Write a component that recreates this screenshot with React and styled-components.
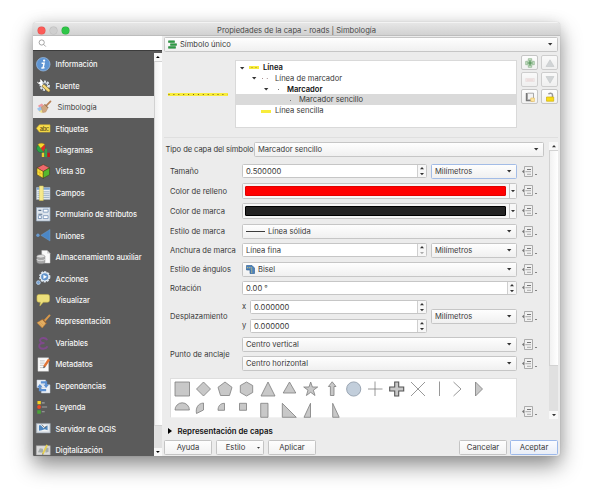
import React from 'react';
import styled, { createGlobalStyle, css } from 'styled-components';

const GlobalStyle = createGlobalStyle`
  * { box-sizing: border-box; }
  html, body { margin: 0; background: #fff; overflow: hidden; }
  body {
    font-family: Inter, "Liberation Sans", sans-serif;
    font-size: 7.6px;
    line-height: 10px;
    color: #3a3a3a;
    white-space: nowrap;
  }
  svg { display: block; overflow: visible; flex: none; }
`;

const Desktop = styled.main`
  width: 593px;
  height: 500px;
  padding: 22px 0 0 33px;
  overflow: hidden;
`;
const Window = styled.section`
  width: 527px;
  height: 434px;
  display: flex;
  flex-direction: column;
  background: #ececec;
  border-radius: 4px 4px 3px 1px;
  overflow: hidden;
  box-shadow: 0 0 1px rgba(0, 0, 0, 0.25), 0 10px 21px rgba(0, 0, 0, 0.42), 0 1px 14px rgba(0, 0, 0, 0.1);
`;
const TitleBar = styled.header`
  height: 14px;
  flex: none;
  display: grid;
  grid-template-columns: 60px 1fr 60px;
  align-items: center;
  background: linear-gradient(#e6e6e6, #d1d1d1);
  border-top: 1px solid #f3f3f3;
  border-bottom: 1px solid #bdbdbd;
`;
const Lights = styled.div`
  display: flex;
  gap: 5px;
  padding-left: 5px;
`;
const Light = styled.i`
  width: 7px;
  height: 7px;
  border-radius: 50%;
  background: ${(p) => p.$color};
  box-shadow: 0 0 0 0.5px ${(p) => p.$ring};
`;
const Title = styled.h1`
  margin: 0;
  padding-top: 2px;
  font-size: 7.6px;
  font-weight: 400;
  line-height: 12px;
  text-align: center;
  color: #4a4a4a;
`;
const Body = styled.div`
  flex: 1;
  min-height: 0;
  display: flex;
`;

/* sidebar */
const Sidebar = styled.aside`
  width: 129px;
  flex: none;
  display: flex;
  flex-direction: column;
`;
const Search = styled.div`
  height: 14px;
  flex: none;
  padding: 3px 0 0 5px;
  background: #fff;
`;
const SideBody = styled.div`
  flex: 1;
  min-height: 0;
  display: flex;
  background: #5b5b5b;
  border-top: 1px solid #3c3c3c;
`;
const SideList = styled.ul`
  flex: 1;
  margin: 0;
  padding: 2.5px 0 0;
  list-style: none;
  overflow: hidden;
`;
const SideItem = styled.li`
  height: 21.45px;
  display: flex;
  align-items: center;
  gap: 5px;
  padding-left: 3px;
  font-size: 7.5px;
  letter-spacing: -0.08px;
  font-weight: 500;
  color: #f6f6f6;
  ${(p) => p.$selected && css`
    gap: 7px;
    font-weight: 400;
    letter-spacing: 0;
    color: #3d3d3d;
    background: #ececec;
  `}
`;
const SideText = styled.span`
  padding-top: 2px;
`;
const ScrollBar = styled.div`
  width: ${(p) => p.$w}px;
  flex: none;
  display: flex;
  flex-direction: column;
  margin: ${(p) => p.$top || 0}px 0 ${(p) => p.$bottom || 0}px;
  background: #e0e0e0;
`;
const ScrollButton = styled.div`
  height: 8px;
  flex: none;
  display: flex;
  align-items: center;
  justify-content: center;
  background: #f8f8f8;
`;
const Thumb = styled.div`
  height: ${(p) => p.$h}px;
  background: linear-gradient(90deg, #f2f2f2, #fff);
  border: solid #d2d2d2;
  border-width: 1px 0 1px 1px;
`;
const Track = styled.div`
  flex: 1;
`;

/* main panel */
const Main = styled.div`
  flex: 1;
  min-width: 0;
  display: flex;
  flex-direction: column;
  padding: 1px 2px 0 2px;
`;
const Field = styled.div`
  height: ${(p) => p.$h || 15}px;
  width: ${(p) => (p.$w ? p.$w + 'px' : 'auto')};
  flex: ${(p) => (p.$w ? 'none' : 1)};
  display: flex;
  align-items: center;
  gap: 3px;
  padding: 0 5px 0 3px;
  border: 1px solid ${(p) => (p.$focus ? '#a3bce6' : '#c6c6c6')};
  border-radius: 1.5px;
  background: linear-gradient(#fefefe, #f0f0f0);
`;
const Grow = styled.span`
  flex: 1;
  padding-top: 1px;
`;
const SpinField = styled(Field)`
  height: 14px;
  padding-right: 0;
  background: #fff;
`;
const Stepper = styled.div`
  width: 9px;
  height: 12px;
  display: flex;
  flex-direction: column;
  align-items: center;
  justify-content: center;
  gap: 3px;
  border-left: 1px solid #cfcfcf;
  background: #f7f7f7;
`;
const TopRow = styled.div`
  display: flex;
  flex: none;
  height: 15px;
`;
const SymbolRow = styled.div`
  display: flex;
  height: 86px;
  flex: none;
  border-bottom: 1px solid #dfdfdf;
`;
const Preview = styled.div`
  width: 71px;
  padding: 41px 0 0 4px;
`;
const Tree = styled.div`
  width: 282px;
  height: 68px;
  margin-top: 8px;
  padding-top: 1px;
  background: #fff;
  border: 1px solid #d9d9d9;
`;
const TreeRow = styled.div`
  height: 10.8px;
  display: flex;
  align-items: center;
  padding: 1px 0 0 ${(p) => 4 + p.$depth * 12}px;
  font-weight: ${(p) => (p.$bold ? 600 : 400)};
  color: ${(p) => (p.$bold ? '#111' : '#3a3a3a')};
  background: ${(p) => (p.$selected ? '#dadada' : 'transparent')};
`;
const TreeArrow = styled.span`
  width: 9px;
`;
const TreeIcon = styled.span`
  width: 14px;
`;
const ToolGrid = styled.div`
  display: grid;
  grid-template-columns: 17px 17px;
  grid-auto-rows: 15px;
  align-content: start;
  gap: 2px 3px;
  margin: 3px 0 0 4px;
`;
const ToolButton = styled.button`
  display: flex;
  align-items: center;
  justify-content: center;
  padding: 0;
  border: 1px solid #c6c6c6;
  border-radius: 2px;
  background: linear-gradient(#fdfdfd, #f1f1f1);
  opacity: ${(p) => (p.$dim ? 0.8 : 1)};
`;
const Settings = styled.div`
  display: flex;
  height: 283px;
  flex: none;
`;
const Form = styled.div`
  width: 385px;
  padding-top: 4px;
`;
const TypeRow = styled.div`
  display: flex;
  align-items: center;
  height: 15px;
  width: 380px;
`;
const TypeLabel = styled.span`
  width: 90px;
  padding: 1px 0 0 1.5px;
  letter-spacing: -0.09px;
`;
const Row = styled.div`
  display: flex;
  align-items: center;
  height: ${(p) => p.$h}px;
  margin-top: ${(p) => p.$gap}px;
  padding-left: 6px;
`;
const Label = styled.span`
  width: 72px;
  flex: none;
  padding-top: 1px;
`;
const Controls = styled.div`
  width: 275px;
  display: flex;
  gap: 4px;
`;
const Stack = styled.div`
  flex: 1;
  display: flex;
  flex-direction: column;
  gap: ${(p) => p.$gap}px;
  > ${Field} { flex: none; }
`;
const AxisRow = styled.div`
  display: flex;
  align-items: center;
`;
const Axis = styled.span`
  width: 8px;
`;
const Overrides = styled.div`
  display: flex;
  flex-direction: column;
  gap: 7px;
  margin-left: 5px;
`;
const Centered = styled.div`
  display: flex;
  align-items: center;
`;
const ColorField = styled(Field)`
  height: 16px;
  padding: 0 0 0 2px;
  background: #f7f7f7;
`;
const Swatch = styled.div`
  flex: 1;
  height: 10px;
  border-radius: 1px;
  background: ${(p) => p.$color};
  border: 1px solid ${(p) => p.$edge};
`;
const ColorMenu = styled.div`
  width: 7px;
  height: 14px;
  display: flex;
  align-items: center;
  justify-content: center;
  border-left: 1px solid #c6c6c6;
`;
const ShapeRow = styled.div`
  display: flex;
  align-items: flex-end;
  margin: 7px 0 0 6px;
`;
const Shapes = styled.div`
  width: 347px;
  height: 40px;
  background: #fff;
  border: 1px solid #dedede;
  border-bottom-color: #f2f2f2;
`;
const LayerHeading = styled.h2`
  display: flex;
  align-items: center;
  gap: 6px;
  height: 10px;
  flex: none;
  margin: 5px 0 4px;
  padding-left: 3.5px;
  font-size: 7.8px;
  font-weight: 600;
  line-height: 10px;
  color: #111;
`;
const Footer = styled.footer`
  display: flex;
  gap: 3px;
  height: 15px;
  flex: none;
`;
const Button = styled.button`
  width: 48px;
  height: 15px;
  display: flex;
  align-items: center;
  justify-content: center;
  gap: 12px;
  padding: 1px 0 0 ${(p) => (p.$menu ? 6 : 0)}px;
  font: inherit;
  font-size: 7.7px;
  color: #3a3a3a;
  border: 1px solid ${(p) => (p.$primary ? '#9db9ea' : '#c4c4c4')};
  border-radius: 1.5px;
  background: ${(p) => (p.$primary ? 'linear-gradient(#fbfcff, #e9eef8)' : 'linear-gradient(#fefefe, #f2f2f2)')};
`;
const ButtonGroup = styled.div`
  display: flex;
  gap: 4px;
`;

/* small glyphs */
const Down = ({ w = 4.4, color = '#333' }) => (
  <svg width={w} height={w * 0.55} viewBox="0 0 8 4.4"><path d="M0 0h8L4 4.4z" fill={color} /></svg>
);
const Up = ({ w = 4.4, color = '#333' }) => (
  <svg width={w} height={w * 0.55} viewBox="0 0 8 4.4"><path d="M0 4.4h8L4 0z" fill={color} /></svg>
);
const Spin = ({ min }) => (
  <Stepper><Up w={4} /><Down w={4} color={min ? '#aaa' : '#333'} /></Stepper>
);
const Override = () => (
  <svg width="16" height="12" viewBox="0 0 16 12">
    <path d="M3.2 2.500L0 5.500l3.200 3z" fill="#777" />
    <path d="M2.500 3V.5h8v10h-8V8" fill="#f1f1f1" stroke="#999" strokeWidth=".8" />
    <path d="M5 3.500h4" stroke="#777" strokeWidth="1" />
    <path d="M3.400 5.700h5.600M5 8.300h4" stroke="#999" strokeWidth=".8" />
    <path d="M13 8.500h2" stroke="#777" strokeWidth=".9" />
  </svg>
);

const icons = {
  info: (
    <>
      <circle cx="7.5" cy="7.5" r="7" fill="#5f95d3" stroke="#9dbfe6" strokeWidth=".7" />
      <circle cx="8.4" cy="3.7" r="1.2" fill="#fff" />
      <path d="M5.8 6.4h2.6L7.3 11.2h1.5M5.5 11.4l2-.1" fill="none" stroke="#fff" strokeWidth="1.5" />
    </>
  ),
  source: (
    <>
      <circle cx="9" cy="8" r="4.2" fill="none" stroke="#dce4ed" strokeWidth="2.4" strokeDasharray="2 1.1" />
      <circle cx="9" cy="8" r="3.3" fill="#6b7580" stroke="#e6ebf1" strokeWidth="1" />
      <path d="M3.5 4.5l5 4.5" stroke="#fff" strokeWidth="2" />
      <path d="M1 3.6l2 1.2 1.6-1.3-.6-2.2c2 .2 3 2 2.200 3.800C5 7.300 2 6.800 1 3.600z" fill="#fff" />
      <path d="M8 8.200l5 4.600" stroke="#8d7636" strokeWidth="3.400" strokeLinecap="round" />
      <path d="M8 8.200l5 4.600" stroke="#f5d878" strokeWidth="2.300" strokeLinecap="round" />
    </>
  ),
  symbology: (
    <>
      <path d="M2 6l4-2.500 2 2-3 4z" fill="#ef9aa0" />
      <path d="M1 9l4-2.500 3 4-4 2z" fill="#9cc3ea" />
      <path d="M3 12l3-2 3 2-3 1.500z" fill="#efe48d" />
      <path d="M5.500 7.500l4-3 3 3.500-2.500 4.500-3 .500z" fill="#cfa680" stroke="#b58c66" strokeWidth=".5" />
      <path d="M11 5.500L15 1.500" stroke="#b98256" strokeWidth="1.800" strokeLinecap="round" />
      <path d="M9 4.500l3.500 3.700" stroke="#8b6a50" strokeWidth="1" />
    </>
  ),
  labels: (
    <>
      <path d="M.5 7.500L3.500 4h11v7.500h-11z" fill="#fbe04e" stroke="#d9b92a" strokeWidth=".6" />
      <text x="4" y="10" fontSize="6" fontWeight="600" fill="#6b5a19" textLength="9.500">abc</text>
    </>
  ),
  diagrams: (
    <>
      <circle cx="5" cy="5.500" r="4.300" fill="#2fa34a" stroke="#176b2b" strokeWidth=".5" />
      <path d="M5 5.500L2 1.500C4-.3 7-.2 9 1.500z" fill="#fbd62b" stroke="#b58c12" strokeWidth=".4" />
      <path d="M5 5.500L9 1.800c1 2.500.5 5-1.500 7.200z" fill="#de2b28" />
      <path d="M6 10h2.500v4.500H6z" fill="#e9cf2f" />
      <path d="M9 6h2.500v8.500H9z" fill="#34a04a" />
      <path d="M11.800 10h2.500v4.500h-2.500z" fill="#c81414" />
    </>
  ),
  view3d: (
    <g stroke="#42340f" strokeWidth=".5" strokeLinejoin="round">
      <path d="M7.500.5L14 4 7.500 7.800 1 4z" fill="#f0686c" />
      <path d="M1 4l6.500 3.800v7L1 11z" fill="#fbdf3a" />
      <path d="M14 4L7.500 7.800v7L14 11z" fill="#55b82e" />
      <path d="M4 6v7M1 7.600l6.500 3.600" stroke="#cc9c18" />
    </g>
  ),
  fields: (
    <>
      <path d="M.5 1.500h14v12.500H.5z" fill="#e8eef4" stroke="#a8b4c0" strokeWidth=".5" />
      <path d="M.8 1.800h13.500v2.200H.8z" fill="#7da5d1" />
      <path d="M1.500 6h12.500M1.500 8h12.500M1.500 10h12.500M1.500 12h12.500" stroke="#92a9c0" strokeWidth=".9" />
      <path d="M3.500 0h4v15h-4z" fill="#f6e98c" stroke="#d8c44e" strokeWidth=".5" />
    </>
  ),
  form: (
    <>
      <path d="M.5.5h14v14H.5z" fill="#dfe6ee" stroke="#94a7bc" strokeWidth=".7" />
      <path d="M2.500 3.500h3M2.500 7.500h4M2.500 11.500h3" stroke="#5d738d" strokeWidth="1.200" />
      <path d="M7.500 2.300h5v3h-5zM7.500 9h5v3h-5zM2.500 9h3v3h-3z" fill="#fff" stroke="#6d8db3" strokeWidth=".8" />
    </>
  ),
  joins: (
    <>
      <circle cx="2" cy="7.500" r="1.700" fill="#6a9bd0" />
      <path d="M5 7.500L14.500 1.500v12z" fill="#4b87c6" stroke="#78a7d7" strokeWidth=".4" />
    </>
  ),
  storage: (
    <>
      <path d="M6 .5h5.500l3 3v10H6z" fill="#fafafa" stroke="#c9c9c9" strokeWidth=".5" />
      <path d="M11.500.5v3h3z" fill="#cfcfcf" />
      <path d="M.8 6.500v6c0 2.400 8.400 2.400 8.400 0v-6z" fill="#a8a8a8" stroke="#777" strokeWidth=".5" />
      <ellipse cx="5" cy="6.500" rx="4.200" ry="1.700" fill="#dedede" stroke="#888" strokeWidth=".5" />
      <path d="M.8 9.500c0 2 8.400 2 8.400 0" fill="none" stroke="#eee" strokeWidth=".8" />
    </>
  ),
  actions: (
    <>
      <circle cx="9" cy="6" r="5" fill="none" stroke="#d7e1ec" strokeWidth="1.800" strokeDasharray="2.200 1" />
      <circle cx="9" cy="6" r="4.300" fill="#6294cc" stroke="#e7eef5" strokeWidth="1.200" />
      <path d="M7.700 3.800L11.300 6 7.700 8.200z" fill="#fff" />
      <circle cx="2.500" cy="12" r="1.900" fill="#77a3d4" stroke="#b9cee5" strokeWidth="1" />
    </>
  ),
  display: (
    <path d="M3 1.500h9q2 0 2 2v4q0 2-2 2H7.500L4 13.500l.5-4H3q-2 0-2-2v-4q0-2 2-2z" fill="#eddf7b" stroke="#c6b54a" strokeWidth=".6" />
  ),
  rendering: (
    <>
      <path d="M9 7l5-5.500" stroke="#d8984a" strokeWidth="2" strokeLinecap="round" />
      <path d="M1 9l6-3.500 3.500 4L6.500 14.500z" fill="#e3ae62" stroke="#b9772f" strokeWidth=".5" />
      <path d="M6.500 5l4.500 5" stroke="#9b6432" strokeWidth="1.100" />
      <path d="M3 9.500l3.500 4M4.500 8.500L8 12" stroke="#c48a42" strokeWidth=".5" />
    </>
  ),
  variables: (
    <path d="M11.500 4.500C10.500 1 4 1.500 4.200 4.500c.2 2.300 2.500 2.800 4.600 2.800-3 0-5.600.7-5.500 3.200.1 3.500 7.500 3.500 8.500.2" fill="none" stroke="#7f4a8b" strokeWidth="1.900" />
  ),
  metadata: (
    <>
      <path d="M2 .8h11v14H2z" fill="#fafafa" stroke="#ccc" strokeWidth=".4" />
      <path d="M4 4h5M4 6.300h5M4 8.600h4M4 11h5" stroke="#aaa" strokeWidth=".7" />
      <path d="M8.500 10L13.500 2.500" stroke="#e27536" strokeWidth="2.600" />
      <path d="M7.500 11.600l.5-2.400 1.700 1.200z" fill="#444" />
    </>
  ),
  dependencies: (
    <>
      <path d="M1 1h9v8H1zM5.500 6h9v8.500h-9z" fill="#edf1f6" stroke="#b7c3d1" strokeWidth=".5" />
      <path d="M5 3.500h5.500v3M10.500 11.500H4V8" fill="none" stroke="#5b90d2" strokeWidth="2.100" />
      <path d="M7.700 6h5.600l-2.800 3.200zM1.200 8.500h5.600L4 5.300z" fill="#5b90d2" />
    </>
  ),
  legend: (
    <>
      <path d="M1.500 1h3.500v3.500H1.500z" fill="#f4d221" />
      <circle cx="3.200" cy="7.300" r="2" fill="#ea4b27" />
      <path d="M1.300 10.500H5v3.700H1.300z" fill="#49a637" />
      <path d="M6 3h3M6 7.300h5.500M6 12.200h3" stroke="#a2a2a2" strokeWidth="1.100" />
    </>
  ),
  server: (
    <>
      <path d="M.3 2.500h14.400v9.800H.3z" fill="#d8dde3" stroke="#9ba5b0" strokeWidth=".6" />
      <path d="M2 4h11v6.500H2z" fill="#f2f5f7" />
      <path d="M3 4.500h2l3 3L12 4.500v5L9 8.500 6 9.500l-3 .500z" fill="#4e86bf" />
      <path d="M6 3.800l3 3 2-1.500" fill="none" stroke="#3c3c3c" strokeWidth=".7" />
    </>
  ),
  digitizing: (
    <>
      <path d="M.3 2.800h14.400v9.500H.3z" fill="#dadada" stroke="#a7a7a7" strokeWidth=".5" />
      <path d="M2 9.500l2-4 3 .5 1 4zM9 5h4v4l-3 1z" fill="#a5acaa" />
      <path d="M7 11.500L11.500 2" stroke="#e6d04e" strokeWidth="1.800" />
      <path d="M6.500 12.500l.2-1.600 1.200.6z" fill="#555" />
    </>
  ),
};

const SideIcon = ({ name }) => <svg width="14.500" height="14.500" viewBox="0 0 15 15">{icons[name]}</svg>;

const sections = [
  ['info', 'Información'],
  ['source', 'Fuente'],
  ['symbology', 'Simbología'],
  ['labels', 'Etiquetas'],
  ['diagrams', 'Diagramas'],
  ['view3d', 'Vista 3D'],
  ['fields', 'Campos'],
  ['form', 'Formulario de atributos'],
  ['joins', 'Uniones'],
  ['storage', 'Almacenamiento auxiliar'],
  ['actions', 'Acciones'],
  ['display', 'Visualizar'],
  ['rendering', 'Representación'],
  ['variables', 'Variables'],
  ['metadata', 'Metadatos'],
  ['dependencies', 'Dependencias'],
  ['legend', 'Leyenda'],
  ['server', 'Servidor de QGIS'],
  ['digitizing', 'Digitalización'],
];

const ShapeGallery = () => (
  <svg width="345" height="38" viewBox="171 379 345 38" fill="#c8c8c8" stroke="#7e7e7e" strokeWidth=".8">
    <path d="M175 382h14.500v14H175z" />
    <path d="M203.500 382l7 7-7 7-7-7z" />
    <path d="M225 382l7 5.300-2.500 8.200h-9L218 387.300z" />
    <path d="M246.500 382l6.200 3.500v7l-6.200 3.500-6.200-3.500v-7z" />
    <path d="M268 382l7 14h-14z" />
    <path d="M289.500 382l6.300 11h-12.600z" />
    <path d="M310.700 382l1.700 5h5.300l-4.300 3.200 1.600 5.300-4.300-3.200-4.300 3.200 1.600-5.300-4.300-3.200h5.300z" />
    <path d="M332.200 381.800l3.800 4.700h-2v9h-3.600v-9h-2z" />
    <circle cx="353.700" cy="389" r="7.100" fill="#c2cedb" stroke="#8996a5" />
    <path d="M375 381.500v14.500M368 389h14.500M411 382l14 14M425 382l-14 14M439.500 381.500V396M453.500 382l7.500 7-7.500 7" fill="none" />
    <path d="M394.700 382h4v5h5v4h-5v5h-4v-5h-5v-4h5z" stroke="#555" strokeWidth="1.100" />
    <path d="M475.500 382l7 7-7 7z" />
    <path d="M175 410a7.200 7.200 0 0 1 14.400 0z" />
    <path d="M203.500 403v7l-7 3.500c-1-5 1-10 7-10.500z" />
    <path d="M224.500 403.300v7H218c0-4 2-7 6.500-7z" />
    <path d="M239.500 403.300h7v7h-7z" />
    <path d="M260.700 403.300h7.300v14h-7.300z" />
    <path d="M282.300 403.300l14 14h-14z" />
    <path d="M310.500 403.300v14h-6.500z" />
    <path d="M332.700 403.300v14h6.500z" />
  </svg>
);

const Unit = ({ focus }) => (
  <Field $w={86} $focus={focus}><Grow>Milímetros</Grow><Down /></Field>
);

const FormRow = ({ label, h, gap, overrides = 1, children }) => (
  <Row $h={h} $gap={gap}>
    <Label>{label}</Label>
    <Controls>{children}</Controls>
    <Overrides>{Array.from({ length: overrides }, (_, i) => <Override key={i} />)}</Overrides>
  </Row>
);

const ColorPicker = ({ color, edge }) => (
  <ColorField>
    <Swatch $color={color} $edge={edge} />
    <ColorMenu><Down w={4} /></ColorMenu>
  </ColorField>
);

export default function App() {
  return (
    <>
      <GlobalStyle />
      <Desktop>
        <Window>
          <TitleBar>
            <Lights>
              <Light $color="#fc5b57" $ring="#e2534f" />
              <Light $color="#cfcfcf" $ring="#bcbcbc" />
              <Light $color="#2fc648" $ring="#2bb03f" />
            </Lights>
            <Title>Propiedades de la capa - roads | Simbología</Title>
          </TitleBar>
          <Body>
            <Sidebar>
              <Search>
                <svg width="9" height="9" viewBox="0 0 9 9" fill="none" stroke="#8f8f8f" strokeWidth=".8">
                  <circle cx="3.700" cy="3.500" r="2.600" /><path d="M5.600 5.400l2.200 2.200" />
                </svg>
              </Search>
              <SideBody>
                <SideList>
                  {sections.map(([icon, text]) => (
                    <SideItem key={icon} $selected={icon === 'symbology'}>
                      <SideIcon name={icon} /><SideText>{text}</SideText>
                    </SideItem>
                  ))}
                </SideList>
                <ScrollBar $w={8} $top={2}>
                  <ScrollButton><Up w={3.800} color="#000" /></ScrollButton>
                  <Thumb $h={365} />
                  <Track />
                  <ScrollButton><Down w={3.800} color="#000" /></ScrollButton>
                </ScrollBar>
              </SideBody>
            </Sidebar>
            <Main>
              <TopRow>
                <Field>
                  <svg width="9" height="9" viewBox="0 0 9 9" stroke="#167a2c" strokeWidth=".5" fill="#31a148">
                    <path d="M.5.8h6v1.700h-6zM2.500 3.700h6v1.700h-6zM.5 6.600h7v1.700h-7z" />
                  </svg>
                  <Grow>Símbolo único</Grow>
                  <Down />
                </Field>
              </TopRow>
              <SymbolRow>
                <Preview>
                  <svg width="60" height="3" viewBox="0 0 60 3">
                    <path d="M0 1.500h60" stroke="#f8ec3c" strokeWidth="3" />
                    <path d="M.5 1.500h59" stroke="#6b5c20" strokeWidth="1" strokeDasharray="1 3.900" />
                  </svg>
                </Preview>
                <Tree>
                  <TreeRow $depth={0} $bold>
                    <TreeArrow><Down /></TreeArrow>
                    <TreeIcon>
                      <svg width="10" height="3"><path d="M0 1.500h10" stroke="#f8ec3c" strokeWidth="3" /><path d="M2.500 1.500h6" stroke="#9c8a2a" strokeDasharray="1 3" /></svg>
                    </TreeIcon>
                    Línea
                  </TreeRow>
                  <TreeRow $depth={1}>
                    <TreeArrow><Down /></TreeArrow>
                    <TreeIcon><svg width="10" height="3"><path d="M1 1.500h8" stroke="#a89090" strokeDasharray="1 3.800" /></svg></TreeIcon>
                    Línea de marcador
                  </TreeRow>
                  <TreeRow $depth={2} $bold>
                    <TreeArrow><Down /></TreeArrow>
                    <TreeIcon><svg width="10" height="3"><path d="M5 1.500h1" stroke="#777" /></svg></TreeIcon>
                    Marcador
                  </TreeRow>
                  <TreeRow $depth={3} $selected>
                    <TreeArrow />
                    <TreeIcon><svg width="10" height="3"><path d="M5 1.500h1" stroke="#777" /></svg></TreeIcon>
                    Marcador sencillo
                  </TreeRow>
                  <TreeRow $depth={1}>
                    <TreeArrow />
                    <TreeIcon><svg width="10" height="3"><path d="M0 1.500h10" stroke="#f8ec3c" strokeWidth="3" /></svg></TreeIcon>
                    Línea sencilla
                  </TreeRow>
                </Tree>
                <ToolGrid>
                  <ToolButton>
                    <svg width="10" height="10" viewBox="0 0 10 10">
                      <path d="M3.300.7h3.400v2.600h2.600v3.400H6.700v2.600H3.300V6.700H.7V3.300h2.600z" fill="#c5dec4" stroke="#8cb48c" strokeWidth=".7" />
                      <path d="M5 2.300v5.400M2.300 5h5.400" stroke="#4d8e51" strokeWidth="1.200" />
                    </svg>
                  </ToolButton>
                  <ToolButton $dim>
                    <svg width="10" height="8" viewBox="0 0 10 8"><path d="M5 .8L9 7.500H1z" fill="#cbcfd1" stroke="#b9bdc0" strokeWidth=".6" /></svg>
                  </ToolButton>
                  <ToolButton $dim>
                    <svg width="10" height="4" viewBox="0 0 10 4"><path d="M.7.5h8.600v3H.7z" fill="#f3e6e6" stroke="#e6d6d6" strokeWidth=".6" /><path d="M2 2h6" stroke="#e4c9c9" strokeWidth=".8" /></svg>
                  </ToolButton>
                  <ToolButton $dim>
                    <svg width="10" height="8" viewBox="0 0 10 8"><path d="M5 7.200L9 .5H1z" fill="#cbcfd1" stroke="#b9bdc0" strokeWidth=".6" /></svg>
                  </ToolButton>
                  <ToolButton>
                    <svg width="10" height="10" viewBox="0 0 10 10">
                      <path d="M.8 1h1.500v7H8v1.200H.8z" fill="#777" />
                      <path d="M2.500 1.200h6v6.600h-6z" fill="#f3f3f3" stroke="#888" strokeWidth=".7" />
                      <path d="M5.800 6h3.600v3.500H5.800z" fill="#ffe7a0" stroke="#e0b95e" strokeWidth=".6" />
                    </svg>
                  </ToolButton>
                  <ToolButton>
                    <svg width="10" height="10" viewBox="0 0 10 10">
                      <path d="M3.500 2.300C4 .7 7.500.6 7.500 3v2" fill="none" stroke="#999" strokeWidth="1.500" />
                      <path d="M1.500 5h7.200v4.200H1.500z" fill="#f8dc15" stroke="#cfae10" strokeWidth=".7" />
                    </svg>
                  </ToolButton>
                </ToolGrid>
              </SymbolRow>
              <Settings>
                <Form>
                  <TypeRow>
                    <TypeLabel>Tipo de capa del símbolo</TypeLabel>
                    <Field><Grow>Marcador sencillo</Grow><Down /></Field>
                  </TypeRow>
                  <FormRow label="Tamaño" h={15} gap={7}>
                    <SpinField><Grow>0.500000</Grow><Spin /></SpinField>
                    <Unit focus />
                  </FormRow>
                  <FormRow label="Color de relleno" h={16} gap={4}>
                    <ColorPicker color="#ff0000" edge="#e00000" />
                  </FormRow>
                  <FormRow label="Color de marca" h={16} gap={4}>
                    <ColorPicker color="#232323" edge="#000" />
                  </FormRow>
                  <FormRow label="Estilo de marca" h={15} gap={5}>
                    <Field>
                      <svg width="19" height="1"><path d="M0 .5h19" stroke="#3c3c3c" /></svg>
                      <Grow>Línea sólida</Grow><Down />
                    </Field>
                  </FormRow>
                  <FormRow label="Anchura de marca" h={15} gap={4}>
                    <SpinField><Grow>Línea fina</Grow><Spin min /></SpinField>
                    <Unit />
                  </FormRow>
                  <FormRow label="Estilo de ángulos" h={15} gap={4}>
                    <Field>
                      <svg width="9" height="9" viewBox="0 0 9 9">
                        <path d="M.5.500H6L8.500 3v5.500H4V5H.5z" fill="#4d83bd" stroke="#26598f" strokeWidth=".6" />
                        <path d="M1 2.700h4.700V8.500" fill="none" stroke="#f2d25c" strokeWidth=".8" strokeDasharray="1.300 .8" />
                      </svg>
                      <Grow>Bisel</Grow><Down />
                    </Field>
                  </FormRow>
                  <FormRow label="Rotación" h={14} gap={4}>
                    <SpinField><Grow>0.00 °</Grow><Spin /></SpinField>
                  </FormRow>
                  <FormRow label="Desplazamiento" h={33} gap={5}>
                    <Stack $gap={5}>
                      <AxisRow><Axis>x</Axis><SpinField><Grow>0.000000</Grow><Spin /></SpinField></AxisRow>
                      <AxisRow><Axis>y</Axis><SpinField><Grow>0.000000</Grow><Spin /></SpinField></AxisRow>
                    </Stack>
                    <Centered><Unit /></Centered>
                  </FormRow>
                  <FormRow label="Punto de anclaje" h={34} gap={4} overrides={2}>
                    <Stack $gap={4}>
                      <Field><Grow>Centro vertical</Grow><Down /></Field>
                      <Field><Grow>Centro horizontal</Grow><Down /></Field>
                    </Stack>
                  </FormRow>
                  <ShapeRow>
                    <Shapes><ShapeGallery /></Shapes>
                    <Overrides><Override /></Overrides>
                  </ShapeRow>
                </Form>
                <ScrollBar $w={9} $top={4} $bottom={2}>
                  <ScrollButton><Up w={4} /></ScrollButton>
                  <Thumb $h={216} />
                  <Track />
                  <ScrollButton><Down w={4} /></ScrollButton>
                </ScrollBar>
              </Settings>
              <LayerHeading>
                <svg width="4" height="6" viewBox="0 0 4 6"><path d="M0 0l4 3-4 3z" fill="#000" /></svg>
                Representación de capas
              </LayerHeading>
              <Footer>
                <ButtonGroup>
                  <Button>Ayuda</Button>
                  <Button $menu>Estilo<Down w={3} /></Button>
                  <Button>Aplicar</Button>
                </ButtonGroup>
                <Grow />
                <Button>Cancelar</Button>
                <Button $primary>Aceptar</Button>
              </Footer>
            </Main>
          </Body>
        </Window>
      </Desktop>
    </>
  );
}
